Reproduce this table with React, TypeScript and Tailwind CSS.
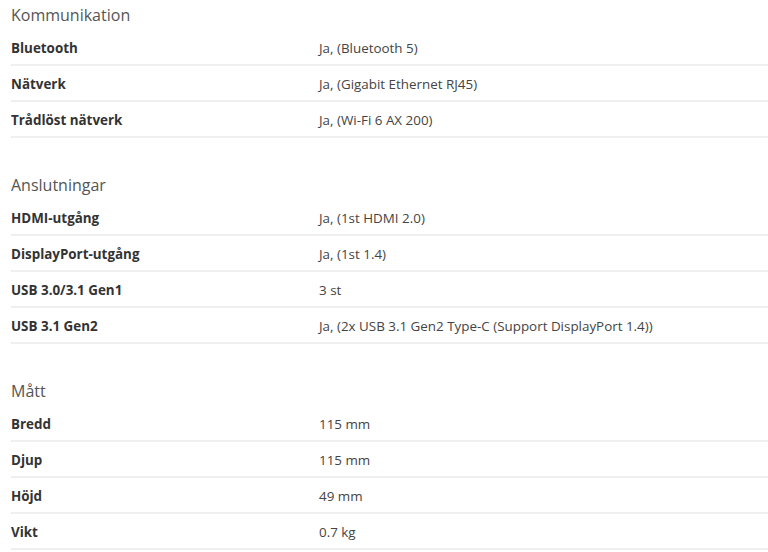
const sections = [
  {
    title: "Kommunikation",
    rows: [
      { label: "Bluetooth", value: "Ja, (Bluetooth 5)" },
      { label: "Nätverk", value: "Ja, (Gigabit Ethernet RJ45)" },
      { label: "Trådlöst nätverk", value: "Ja, (Wi-Fi 6 AX 200)" },
    ],
  },
  {
    title: "Anslutningar",
    rows: [
      { label: "HDMI-utgång", value: "Ja, (1st HDMI 2.0)" },
      { label: "DisplayPort-utgång", value: "Ja, (1st 1.4)" },
      { label: "USB 3.0/3.1 Gen1", value: "3 st" },
      { label: "USB 3.1 Gen2", value: "Ja, (2x USB 3.1 Gen2 Type-C (Support DisplayPort 1.4))" },
    ],
  },
  {
    title: "Mått",
    rows: [
      { label: "Bredd", value: "115 mm" },
      { label: "Djup", value: "115 mm" },
      { label: "Höjd", value: "49 mm" },
      { label: "Vikt", value: "0.7 kg" },
    ],
  },
];

export default function App() {
  return (
    <div className="w-[768px] h-[552px] overflow-hidden bg-white pl-[11px] pt-[4px] font-['Open_Sans',sans-serif]">
      {sections.map((section) => (
        <div key={section.title} className="mb-[36px]">
          <h2 className="text-[16px] leading-[22px] text-[#555] mb-[4px]">{section.title}</h2>
          {section.rows.map((row) => (
            <div key={row.label} className="flex items-center h-[36px] pt-[3px] border-b-2 border-[#efefef]">
              <div className="w-[308px] text-[13.4px] font-bold text-[#333]">{row.label}</div>
              <div className="text-[13.4px] text-[#444]">{row.value}</div>
            </div>
          ))}
        </div>
      ))}
    </div>
  );
}
